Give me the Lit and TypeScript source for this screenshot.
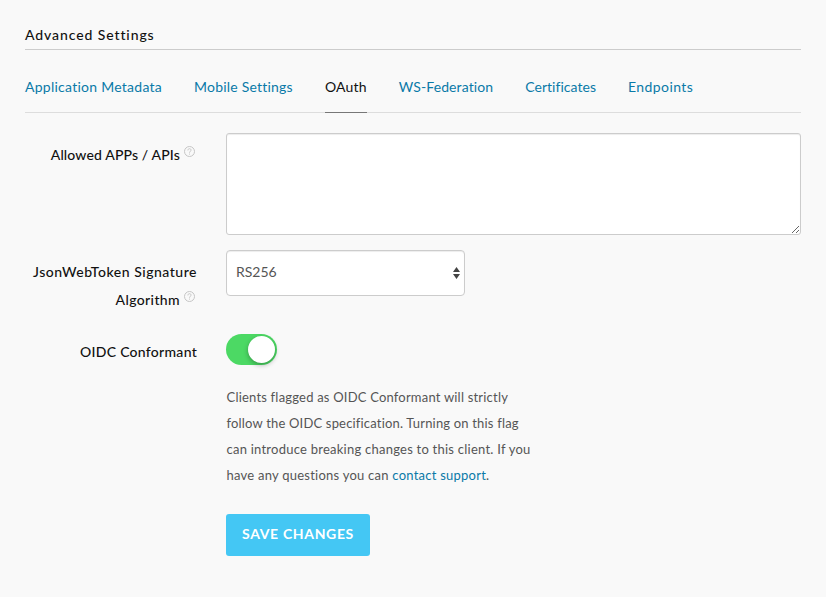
import { LitElement, html, css } from "lit";
import { customElement, state } from "lit/decorators.js";
import { classMap } from "lit/directives/class-map.js";

@customElement("help-icon")
export class HelpIcon extends LitElement {
  static styles = css`
    :host { display: inline-block; width: 11px; height: 11px; }
    svg { display: block; overflow: visible; }
  `;
  render() {
    return html`<svg width="11" height="11" viewBox="0 0 11 11" fill="none" stroke="#c6c6c6" stroke-width="1">
      <circle cx="5.5" cy="5.5" r="5"></circle>
      <path d="M3.9 4.4C3.9 3.3 4.6 2.7 5.5 2.7S7.1 3.3 7.1 4.1C7.1 5.2 5.5 5.3 5.5 6.7M5.5 7.6V8.6"></path>
    </svg>`;
  }
}

@customElement("app-root")
export class AppRoot extends LitElement {
  @state() private active = "OAuth";
  @state() private oidc = true;

  private tabs = [
    { label: "Application Metadata", cls: "t-meta" },
    { label: "Mobile Settings", cls: "t-mobile" },
    { label: "OAuth", cls: "t-oauth" },
    { label: "WS-Federation", cls: "t-ws" },
    { label: "Certificates", cls: "t-cert" },
    { label: "Endpoints", cls: "t-end" },
  ];

  static styles = css`
    :host {
      display: block;
      box-sizing: border-box;
      height: 597px;
      padding: 21px 25px 0;
      overflow: hidden;
      background: #f9f9f9;
      color: #222;
      font: 14px/28px Lato, "Open Sans", sans-serif;
    }
    h2 {
      margin: 0;
      height: 28px;
      border-bottom: 1px solid #ccc;
      font-size: 14px;
      font-weight: 500;
      letter-spacing: 0.9px;
      color: #111;
    }
    nav {
      display: flex;
      height: 62px;
      border-bottom: 1px solid #ddd;
    }
    .tab {
      box-sizing: border-box;
      height: 63px;
      padding-top: 23px;
      margin-right: 32px;
      color: #0a7aa8;
      white-space: nowrap;
      letter-spacing: 0.26px;
      cursor: pointer;
    }
    .tab.active { color: #111; border-bottom: 1px solid #777; }
    .t-mobile { letter-spacing: 0.21px; }
    .t-oauth { letter-spacing: 0.2px; }
    .t-ws { letter-spacing: 0.1px; }
    .t-cert { letter-spacing: 0.04px; }
    .t-end { letter-spacing: 0.42px; }
    .row { display: grid; grid-template-columns: 172px 1fr; column-gap: 29px; }
    .label { text-align: right; font-weight: 500; color: #111; white-space: nowrap; letter-spacing: 0.28px; }
    .n-apps { letter-spacing: 0.14px; }
    .n-jwt { letter-spacing: 0.52px; }
    .n-alg { letter-spacing: 0.38px; }
    .apps { margin-top: 20px; height: 102px; }
    .apps .label { padding-top: 8px; }
    .alg { margin-top: 15px; height: 46px; }
    .alg .label { padding-top: 8px; }
    .oidc { margin-top: 38px; }
    .oidc .label { padding-top: 4px; }
    help-icon { margin: 0 2px 0 4px; vertical-align: 3px; line-height: 0; }
    textarea {
      display: block;
      box-sizing: border-box;
      width: 575px;
      height: 102px;
      margin: 0;
      border: 1px solid #ccc;
      border-radius: 3px;
      background: #fff;
      box-shadow: inset 0 1px 1px rgba(0, 0, 0, 0.075);
      outline: none;
    }
    .select {
      box-sizing: border-box;
      display: flex;
      align-items: center;
      justify-content: space-between;
      width: 239px;
      height: 46px;
      padding: 0 4px 2px 9px;
      border: 1px solid #ccc;
      border-radius: 4px;
      background: #fff;
      color: #555;
      box-shadow: inset 0 1px 1px rgba(0, 0, 0, 0.075);
    }
    .select svg { position: relative; top: 1px; }
    .switch {
      box-sizing: border-box;
      width: 51px;
      height: 31px;
      padding: 2px 1px 0 22px;
      border-radius: 16px;
      background: #4cd964;
    }
    .switch.off { padding-left: 2px; background: #ddd; }
    .knob {
      width: 27px;
      height: 27px;
      border-radius: 50%;
      background: #fff;
      box-shadow: 0 2px 5px rgba(0, 0, 0, 0.3);
    }
    .help { margin: 19px 0 0 0.5px; font-size: 13px; line-height: 26px; color: #555; white-space: nowrap; }
    .help span { display: block; }
    .l1 { letter-spacing: 0.2px; }
    .l2 { letter-spacing: 0.18px; }
    .l3 { letter-spacing: 0.24px; }
    .l4 { letter-spacing: 0.24px; }
    a { color: #0a7aa8; text-decoration: none; }
    button {
      display: block;
      width: 144px;
      height: 42px;
      margin: 26px 0 0;
      padding: 0 0 2px;
      border: 0;
      border-radius: 3px;
      background: #44c7f4;
      color: #fff;
      font: 700 14px/40px Lato, sans-serif;
      letter-spacing: 0.66px;
      white-space: nowrap;
    }
  `;

  render() {
    return html`
      <h2>Advanced Settings</h2>
      <nav>
        ${this.tabs.map((t) => html`<div
          class=${classMap({ tab: true, [t.cls]: true, active: t.label === this.active })}
          @click=${() => (this.active = t.label)}>${t.label}</div>`)}
      </nav>
      <div class="row apps">
        <div class="label"><span class="n-apps">Allowed APPs / APIs</span><help-icon></help-icon></div>
        <textarea></textarea>
      </div>
      <div class="row alg">
        <div class="label"><span class="n-jwt">JsonWebToken Signature</span><br><span class="n-alg">Algorithm</span><help-icon></help-icon></div>
        <div class="select">
          <span>RS256</span>
          <svg width="7" height="12" viewBox="0 0 7 12" fill="#444"><path d="M3.5 0L7 5H0zM0 7H7L3.5 12z"></path></svg>
        </div>
      </div>
      <div class="row oidc">
        <div class="label">OIDC Conformant</div>
        <div>
          <div class=${classMap({ switch: true, off: !this.oidc })} @click=${() => (this.oidc = !this.oidc)}>
            <div class="knob"></div>
          </div>
          <p class="help">
            <span class="l1">Clients flagged as OIDC Conformant will strictly</span>
            <span class="l2">follow the OIDC specification. Turning on this flag</span>
            <span class="l3">can introduce breaking changes to this client. If you</span>
            <span class="l4">have any questions you can <a>contact support</a>.</span>
          </p>
          <button>SAVE CHANGES</button>
        </div>
      </div>
    `;
  }
}
